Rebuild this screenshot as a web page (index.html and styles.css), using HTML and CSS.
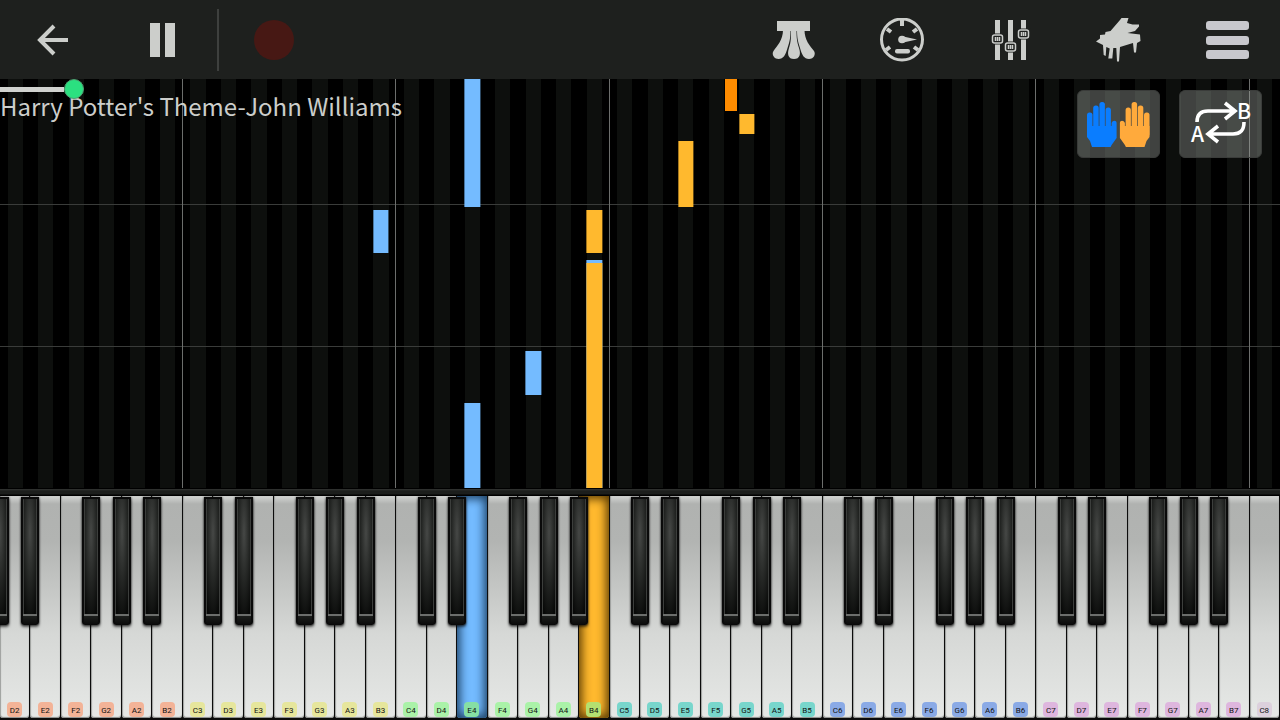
FILE: index.html
```
<!DOCTYPE html>
<html lang="en">
<head>
  <meta charset="UTF-8">
  <meta name="viewport" content="width=device-width, initial-scale=1.0">
  <title>Harry Potter's Theme-John Williams</title>
  <link rel="stylesheet" href="styles.css">
</head>
<body>

<header class="toolbar">
  <button type="button" class="tool" aria-label="Back">
    <svg width="44" height="44" viewBox="0 0 44 44" fill="none" stroke="currentColor" stroke-width="4">
      <path d="M36 22H8M22 8L8 22l14 14"/>
    </svg>
  </button>
  <button type="button" class="tool" aria-label="Pause">
    <svg width="44" height="44" viewBox="0 0 44 44" fill="currentColor">
      <path d="M10 5h10v34H10zM25 5h10v34H25z"/>
    </svg>
  </button>
  <span class="divider"></span>
  <button type="button" class="tool" aria-label="Record"><span class="record"></span></button>

  <div class="tools-right">
    <button type="button" class="tool" aria-label="Pedals">
      <svg width="44" height="44" viewBox="0 0 44 44" fill="currentColor">
        <path d="M5 3h33v10H5z"/>
        <path d="M11 12h7.500c0 8-1 12-3 18-2 7-4 11-9 11-5 0-7-5-5-8C5 28 11 22 11 12z"/>
        <path d="M19 12h5.500c0 8 .500 12 2.500 18s1 11-5 11-7-5-5-11 2-10 2-18z"/>
        <path d="M32.500 12H25c0 8 1 12 3 18 2 7 4 11 9 11 5 0 7-5 5-8-4-5-9.500-11-9.500-21z"/>
      </svg>
    </button>
    <button type="button" class="tool" aria-label="Tempo">
      <svg width="44" height="44" viewBox="0 0 44 44" fill="currentColor">
        <circle cx="22" cy="21.500" r="20.500" fill="none" stroke="currentColor" stroke-width="3"/>
        <path d="M22 2v6M7 11l4 3M37 11l-4 3M6 32l4-3M38 32l-4-3" stroke="currentColor" stroke-width="4"/>
        <path d="M21 18l16 3.500-16 3.500z"/>
        <circle cx="22" cy="21.500" r="3.800"/>
        <rect x="15" y="31" width="15" height="4.500" rx="2"/>
      </svg>
    </button>
    <button type="button" class="tool" aria-label="Mixer">
      <svg width="44" height="44" viewBox="0 0 44 44" fill="currentColor">
        <path d="M7 2h5v40H7zM20 2h5v40h-5zM33 2h5v40h-5z"/>
        <g stroke="#1e201e" stroke-width="5">
          <rect x="5" y="18" width="9" height="6"/>
          <rect x="18" y="26" width="9" height="6"/>
          <rect x="31" y="13" width="9" height="6"/>
        </g>
        <g fill="#1e201e" stroke="currentColor" stroke-width="1.500">
          <rect x="4.500" y="17" width="10" height="8" rx="2"/>
          <rect x="17.500" y="25" width="10" height="8" rx="2"/>
          <rect x="30.500" y="12" width="10" height="8" rx="2"/>
          <path d="M7.500 19v4M9.500 19v4M11.500 19v4M20.500 27v4M22.500 27v4M24.500 27v4M33.500 14v4M35.500 14v4M37.500 14v4"/>
        </g>
      </svg>
    </button>
    <button type="button" class="tool" aria-label="Instrument">
      <svg width="48" height="46" viewBox="0 0 48 46" fill="currentColor">
        <path d="M2 24.500L6 21.500V18l5-.500.500-2.500 5-1L26 3l1.500-2h7L33 6l5.500 1.500 6.500 0v2L41 14l-7.500 2L46 17.500l.500 6.500-3.500 2-1 9.500h-2L39 26l-13 4-1 14.500h-2L22.300 31h-3l-1 10.500h-4l1.400-10-3.400-1.500-.600 9-2-1L9 28z"/>
      </svg>
    </button>
    <button type="button" class="tool" aria-label="Menu">
      <svg width="46" height="44" viewBox="0 0 46 44" fill="#c8c8cd">
        <rect x="3" y="3" width="43" height="9" rx="3"/>
        <rect x="3" y="18" width="43" height="9" rx="3"/>
        <rect x="3" y="32" width="43" height="9" rx="3"/>
      </svg>
    </button>
  </div>
</header>

<main class="roll">
  <div class="notes" id="notes"></div>

  <div class="song">
    <input class="progress" type="range" min="0" max="1000" value="51" aria-label="Song position">
    <h1 class="song-title">Harry Potter's Theme-John Williams</h1>
  </div>

  <div class="modes">
    <button type="button" class="mode" aria-label="Hands">
      <svg width="64" height="46" viewBox="0 0 64 46">
        <defs>
          <g id="hand">
            <rect x="0" y="11.500" width="5.500" height="24" rx="2.500"/>
            <rect x="6.200" y="4.500" width="5.500" height="30" rx="2.500"/>
            <rect x="12.400" y="1" width="5.500" height="30" rx="2.500"/>
            <rect x="18.600" y="6.500" width="5.300" height="30" rx="2.500"/>
            <path d="M0 25h24.600v-3c1-3 5-3 5 0v15l-5 7-1 2H5l-2-6-3-4z"/>
          </g>
        </defs>
        <use href="#hand" fill="#0a7dff"/>
        <use href="#hand" fill="#ffaa3c" transform="translate(62.500 0) scale(-1 1)"/>
      </svg>
    </button>
    <button type="button" class="mode" aria-label="Loop from A to B">
      <svg width="70" height="62" viewBox="-4 -8 70 62" fill="none" stroke="#fff" stroke-width="3.600">
        <path d="M7 21c0-8 4-11 11-11h26M35 2l10 8-10 8"/>
        <path d="M54 21c0 9-4 12-11 12H19M28 25l-10 8 10 8"/>
        <text class="loop-letter" x="1" y="41">A</text>
        <text class="loop-letter" x="47" y="18">B</text>
      </svg>
    </button>
  </div>
</main>

<div class="rail"></div>
<div class="keyboard" id="keyboard"></div>

<script>
  var names = ['C', 'D', 'E', 'F', 'G', 'A', 'B'];
  var keyCount = 42;
  var pressed = { E4: 'left', B4: 'right' };

  // key: white key index from D2, start and length in pixels above the keys
  var notes = [
    { key: 15, start: 0, length: 85, hand: 'left' },
    { key: 19, start: 0, length: 228, hand: 'left' },
    { key: 19, start: 0, length: 225, hand: 'right' },
    { key: 17, start: 93, length: 44, hand: 'left' },
    { key: 12, start: 235, length: 43, hand: 'left' },
    { key: 19, start: 235, length: 43, hand: 'right' },
    { key: 15, start: 281, length: 140, hand: 'left' },
    { key: 22, start: 281, length: 66, hand: 'right' },
    { key: 24, start: 354, length: 20, hand: 'right' },
    { key: 23.5, start: 377, length: 50, hand: 'right', sharp: true }
  ];

  function addBlackKey(slot, name, side) {
    var black = document.createElement('button');
    black.type = 'button';
    black.className = 'black-key ' + side;
    black.setAttribute('aria-label', name);
    slot.appendChild(black);
  }

  var keyboard = document.getElementById('keyboard');
  for (var i = 0; i < keyCount; i++) {
    var letter = names[(i + 1) % 7];
    var octave = 2 + Math.floor((i + 1) / 7);
    var name = letter + octave;

    var slot = document.createElement('div');
    slot.className = 'slot';
    slot.innerHTML = '<button type="button" class="white-key ' + (pressed[name] || '') + '">' +
      '<span class="label octave-' + octave + '">' + name + '</span></button>';

    if (i === 0) {
      addBlackKey(slot, 'C#2', 'before');
    }
    if (letter !== 'E' && letter !== 'B' && i < keyCount - 1) {
      addBlackKey(slot, letter + '#' + octave, 'after');
    }
    keyboard.appendChild(slot);
  }

  var roll = document.getElementById('notes');
  notes.forEach(function (note) {
    var el = document.createElement('div');
    el.className = 'note ' + note.hand + (note.sharp ? ' sharp' : '');
    el.style.left = (note.key + 0.5) / keyCount * 100 + '%';
    el.style.bottom = note.start + 'px';
    el.style.height = note.length + 'px';
    roll.appendChild(el);
  });
</script>

</body>
</html>
```
FILE: styles.css
```
* {
  box-sizing: border-box;
}

body {
  margin: 0;
  min-height: 100vh;
  display: flex;
  flex-direction: column;
  overflow: hidden;
  background: #000;
  color: #cccecb;
  font-family: "Noto Sans CJK SC", "Noto Sans", sans-serif;
}

button {
  padding: 0;
  border: none;
  background: none;
  color: inherit;
  cursor: pointer;
}

svg {
  display: block;
}

/* toolbar */
.toolbar {
  display: flex;
  align-items: center;
  height: 79px;
  background: #1e201e;
}

.tool {
  display: flex;
  align-items: center;
  justify-content: center;
  width: 108px;
  height: 78px;
}

.divider {
  width: 2px;
  height: 62px;
  margin: 0 1px;
  background: #3e403e;
}

.record {
  width: 40px;
  height: 40px;
  border-radius: 50%;
  background: #471814;
}

.tools-right {
  display: flex;
  margin-left: auto;
}

/* falling notes */
.roll {
  position: relative;
  flex: 1;
  display: flex;
  justify-content: space-between;
  align-items: flex-start;
  overflow: hidden;
  background: repeating-linear-gradient(90deg,
    #000 0, #000 calc(100% / 168),
    #0d0f0d calc(100% / 168), #0d0f0d calc(100% / 56),
    #000 calc(100% / 56), #000 calc(100% / 42));
}

/* a line at every C and at every bar */
.notes {
  position: absolute;
  inset: 0;
  background:
    repeating-linear-gradient(90deg,
      transparent 0, transparent calc(100% / 7 - 1px),
      #6c6e6c calc(100% / 7 - 1px), #6c6e6c calc(100% / 7),
      transparent calc(100% / 7), transparent calc(100% / 6)),
    repeating-linear-gradient(0deg, transparent 0, transparent 141px, #3a3c3a 141px, #3a3c3a 142px);
}

.note {
  position: absolute;
  width: calc(100% / 84);
  transform: translateX(-50%);
}

.note.sharp {
  width: 12px;
}

.note.left {
  background: #74bbff;
}

.note.right {
  background: #ffb92e;
}

.note.right.sharp {
  background: #ff8c00;
}

.song {
  position: relative;
  flex: 1;
}

.progress {
  -webkit-appearance: none;
  appearance: none;
  display: block;
  position: absolute;
  top: 0;
  left: 0;
  width: 100vw;
  height: 20px;
  margin: 0;
  background: linear-gradient(#d0d2cf, #d0d2cf) 0 50% / 5% 5px no-repeat;
}

.progress::-webkit-slider-thumb {
  -webkit-appearance: none;
  width: 20px;
  height: 20px;
  border: 1px solid #4f9c70;
  border-radius: 50%;
  background: #2be080;
}

.song-title {
  margin: 10px 0 0;
  font-size: 24px;
  font-weight: 400;
  line-height: 34px;
}

.modes {
  position: relative;
  display: flex;
  gap: 19px;
  padding: 11px 18px 0 0;
}

.mode {
  display: flex;
  align-items: center;
  justify-content: center;
  width: 83px;
  height: 68px;
  border: 1px solid #3a3c3a;
  border-radius: 6px;
  background: rgba(160, 164, 160, 0.4);
}

.loop-letter {
  fill: #fff;
  stroke: none;
  font-family: "Noto Sans CJK SC", "Noto Sans", sans-serif;
  font-size: 21px;
  font-weight: 500;
}

/* keyboard */
.rail {
  height: 8px;
  background: linear-gradient(#000 0, #000 1px, #343634 1px, #1c1e1c 3px, #1c1e1c 6px, #000 7px);
}

.keyboard {
  display: grid;
  grid-template-columns: repeat(42, 1fr);
  height: 224px;
  background: #0c0c0c;
}

.slot {
  position: relative;
  display: flex;
  min-width: 0;
}

.white-key {
  flex: 1;
  min-width: 0;
  display: flex;
  flex-direction: column;
  justify-content: flex-end;
  align-items: center;
  margin: 0 1px 2px 0;
  padding-bottom: 1px;
  border-radius: 0 0 3px 3px;
  background: linear-gradient(#d4d6d4 0, #b0b2b0 8px, #b2b4b2 20%, #d6d8d6 62%, #e6e8e6);
  box-shadow: inset 0 -1px 1px #8a8c8a, inset 1px 0 1px #a0a2a0;
}

.white-key.left {
  background: #74bbff;
  box-shadow: inset 0 0 10px 3px #1f4468;
}

.white-key.right {
  background: #ffb92e;
  box-shadow: inset 0 0 10px 3px #5e3e04;
}

.label {
  width: 15px;
  height: 15px;
  border-radius: 4px;
  color: #111;
  font-family: Roboto, sans-serif;
  font-size: 8px;
  line-height: 17px;
  text-align: center;
}

.octave-2 {
  background: #f3b397;
}

.octave-3 {
  background: #e6e69c;
}

.octave-4 {
  background: #aaf2a8;
}

.left .octave-4 {
  background: #86dfa4;
}

.right .octave-4 {
  background: #b4e070;
}

.octave-5 {
  background: #78d6cc;
}

.octave-6 {
  background: #8aaae6;
}

.octave-7 {
  background: #deb6de;
}

.octave-8 {
  background: #dcd0dc;
}

/* front edge of the key over the lit top face */
.black-key {
  position: absolute;
  z-index: 1;
  top: 1px;
  width: 18px;
  height: 128px;
  border: 2px solid #0a0a0a;
  border-bottom-width: 1px;
  border-radius: 0 0 3px 3px;
  background:
    linear-gradient(transparent 115px, #6c6e6c 115px, #6c6e6c 117px, #1c1e1c 117px, #0c0c0c),
    linear-gradient(90deg, #3c3e3c 1px, transparent 1px, transparent 13px, #3c3e3c 13px),
    radial-gradient(ellipse 10px 90px at 50% 34px, #464846, #262826 50%, #080908);
  box-shadow: 0 2px 3px rgba(0, 0, 0, 0.6), 0 0 2px #222;
}

.black-key.after {
  right: -9px;
}

.black-key.before {
  left: -9px;
}
```
